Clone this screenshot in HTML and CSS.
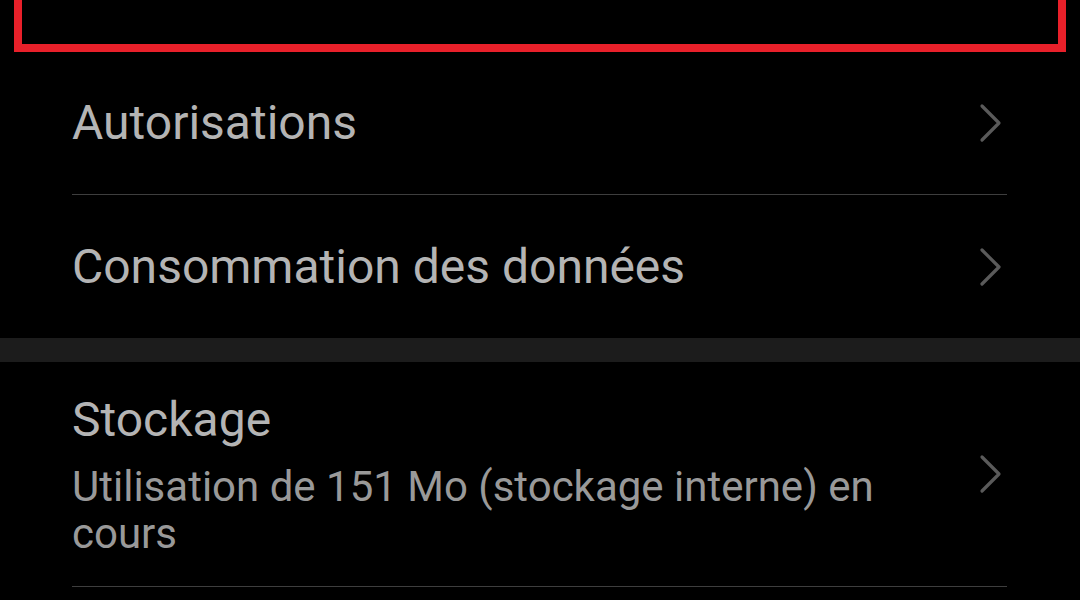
FILE: index.html
```html
<!DOCTYPE html>
<html lang="fr">
<head>
<meta charset="utf-8">
<title>Infos sur l'application</title>
<link rel="stylesheet" href="styles.css">
</head>
<body>
  <div class="highlight">
    <div class="highlight-text">Notifications</div>
  </div>
  <div class="list">
    <div class="row">
      <div class="row-text">
        <div class="title">Autorisations</div>
      </div>
      <svg class="chev" viewBox="0 0 24 40" width="24" height="40"><path d="M3 3 L20 20 L3 37" fill="none" stroke="#5a5a5a" stroke-width="3.2" stroke-linecap="round" stroke-linejoin="round"/></svg>
    </div>
    <div class="row">
      <div class="row-text">
        <div class="title">Consommation des données</div>
      </div>
      <svg class="chev" viewBox="0 0 24 40" width="24" height="40"><path d="M3 3 L20 20 L3 37" fill="none" stroke="#5a5a5a" stroke-width="3.2" stroke-linecap="round" stroke-linejoin="round"/></svg>
    </div>
  </div>
  <div class="band"></div>
  <div class="list">
    <div class="row tall">
      <div class="row-text">
        <div class="title">Stockage</div>
        <div class="sub">Utilisation de 151 Mo (stockage interne) en cours</div>
      </div>
      <svg class="chev" viewBox="0 0 24 40" width="24" height="40"><path d="M3 3 L20 20 L3 37" fill="none" stroke="#5a5a5a" stroke-width="3.2" stroke-linecap="round" stroke-linejoin="round"/></svg>
    </div>
  </div>
</body>
</html>
```
FILE: styles.css
```css
html, body {
  margin: 0;
  padding: 0;
  background: #000;
  font-family: Roboto, "Noto Sans", sans-serif;
  overflow: hidden;
}

.highlight {
  margin: 0 14px;
  height: 44px;
  border: 8px solid #e8202a;
  border-top: none;
  overflow: hidden;
}

.highlight-text {
  margin-top: -48px;
  padding-left: 58px;
  font-size: 48px;
  line-height: 52px;
  color: #0c0c0c;
}

.list {
  padding: 0 73px 0 72px;
}

.row {
  display: flex;
  align-items: center;
  height: 142px;
  border-bottom: 1px solid #3e3e3e;
}

.row + .row {
  border-bottom: none;
  height: 143px;
}

.row.tall {
  height: 224px;
  border-bottom: 1px solid #3e3e3e;
}

.row-text {
  flex: 1;
  min-width: 0;
}

.title {
  font-size: 48px;
  line-height: 58px;
  color: #b4b4b4;
}

.sub {
  font-size: 42px;
  line-height: 47px;
  color: #999;
  margin-top: 14px;
}

.chev {
  flex: none;
  margin-right: 4px;
}

.band {
  height: 24px;
  background: #1c1c1c;
}
```
